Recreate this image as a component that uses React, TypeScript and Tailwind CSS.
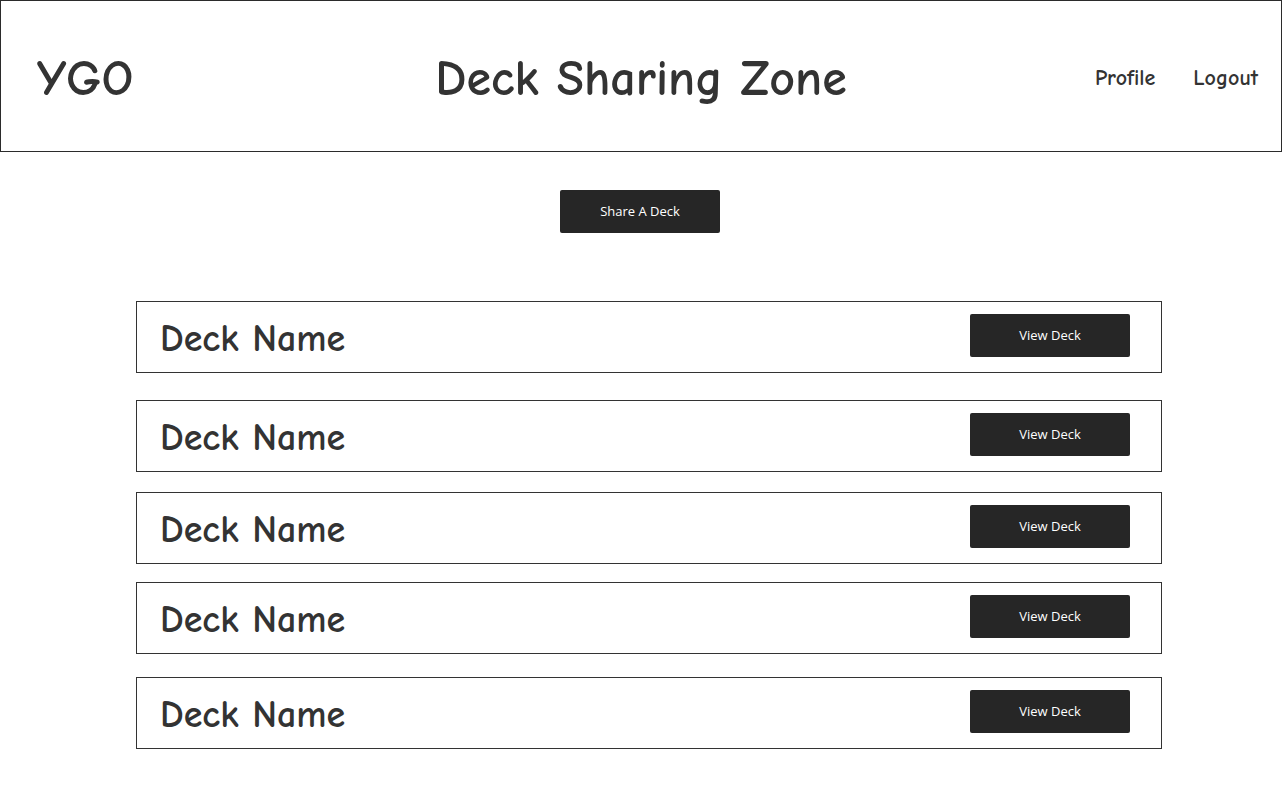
const decks = [
  { name: "Deck Name", mt: "mt-[68px]" },
  { name: "Deck Name", mt: "mt-[27px]" },
  { name: "Deck Name", mt: "mt-[20px]" },
  { name: "Deck Name", mt: "mt-[18px]" },
  { name: "Deck Name", mt: "mt-[23px]" },
];

const hand = "font-['Comic_Sans_MS','Comic_Neue','Open_Sans',sans-serif]";
const btnFont = "font-['Open_Sans','Noto_Sans',sans-serif]";

function DarkButton({ label }: { label: string }) {
  return (
    <button
      className={`h-[43px] w-[160px] rounded-[2px] bg-[#262626] text-[13px] text-white ${btnFont}`}
    >
      {label}
    </button>
  );
}

export default function App() {
  return (
    <div className="min-h-[800px] w-[1282px] bg-white text-[#333333]">
      {/* Header */}
      <header className={`flex h-[152px] items-center border border-[#2b2b2b] font-bold ${hand}`}>
        <div className="w-[400px] pl-[36px] pt-[6px] text-[50px] leading-none">YGO</div>
        <div className="flex-1 pt-[6px] text-center text-[50px] leading-none">Deck Sharing Zone</div>
        <nav className="flex w-[400px] justify-end gap-[38px] pr-[23px] pt-[4px] text-[22px] leading-none">
          <span>Profile</span>
          <span>Logout</span>
        </nav>
      </header>

      <div className="mt-[38px] flex justify-center pr-[2px]">
        <DarkButton label="Share A Deck" />
      </div>

      {/* Deck list */}
      <div className="flex flex-col pb-[51px] pl-[136px]">
        {decks.map((d, i) => (
          <div
            key={i}
            className={`${d.mt} flex h-[72px] w-[1026px] items-start justify-between border border-[#333333] pl-[23px] pr-[31px]`}
          >
            <div className={`pt-[18px] text-[38px] font-bold leading-none ${hand}`}>{d.name}</div>
            <div className="pt-[12px]">
              <DarkButton label="View Deck" />
            </div>
          </div>
        ))}
      </div>
    </div>
  );
}
